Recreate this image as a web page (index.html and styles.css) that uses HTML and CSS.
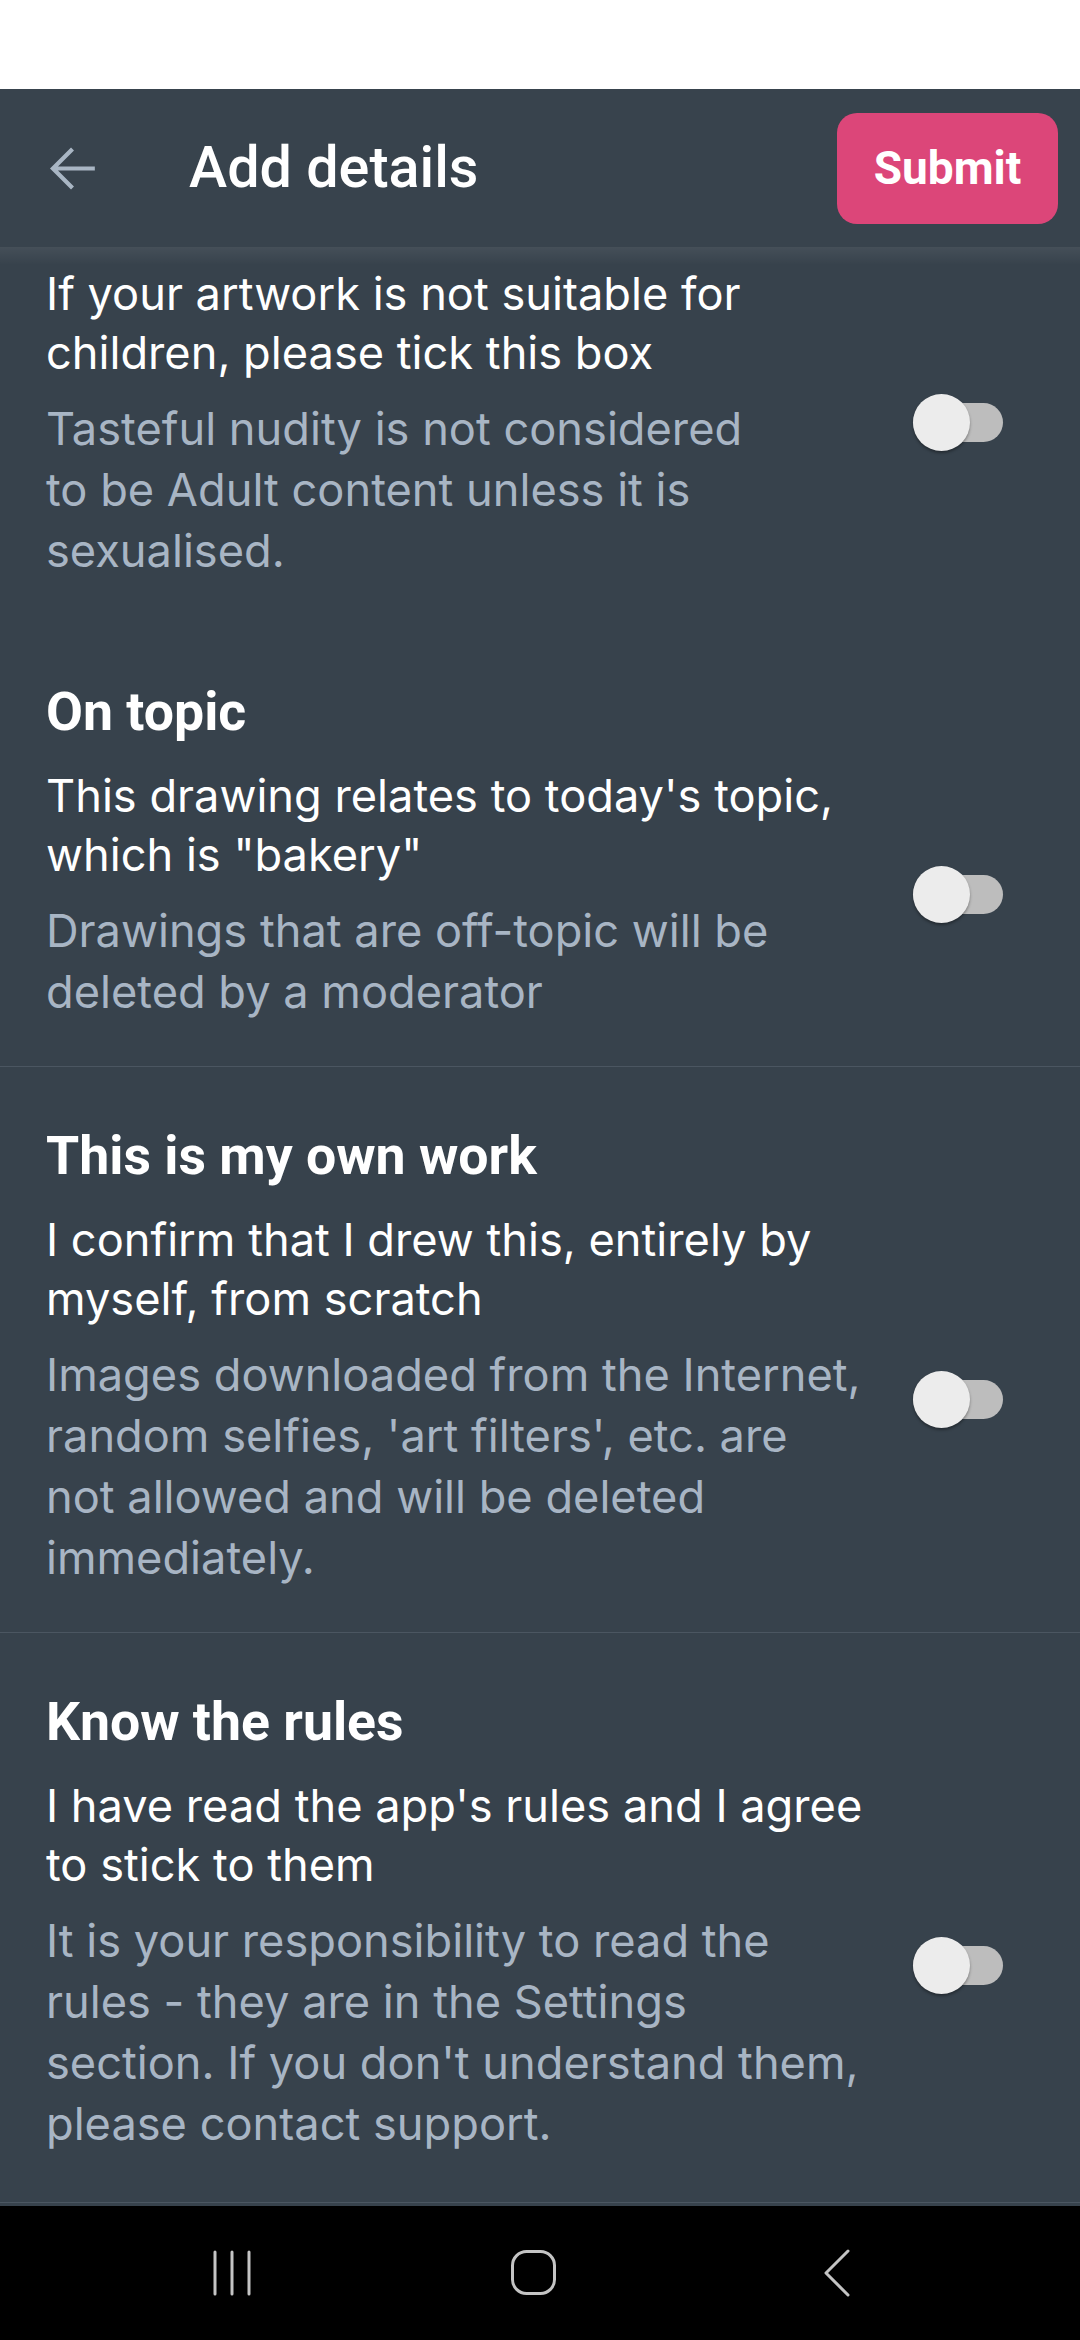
FILE: index.html
```html
<!DOCTYPE html>
<html lang="en">
<head>
<meta charset="utf-8">
<title>Add details</title>
<link rel="stylesheet" href="styles.css">
</head>
<body>
<div class="screen">
  <div class="statusbar"></div>
  <header class="appbar">
    <button class="back" aria-label="Back">
      <svg viewBox="0 0 24 24" width="67" height="67"><path d="M20 12H5.2M12 5l-7 7 7 7" fill="none" stroke="#a9b6c4" stroke-width="1.5" stroke-linecap="butt" stroke-linejoin="miter"/></svg>
    </button>
    <h1 class="title">Add details</h1>
    <button class="submit">Submit</button>
  </header>
  <main class="content">
    <section class="item item--cut">
      <div class="row">
        <div class="texts">
          <p class="primary">If your artwork is not suitable for<br>children, please tick this box</p>
          <p class="secondary">Tasteful nudity is not considered<br>to be Adult content unless it is<br>sexualised.</p>
        </div>
        <span class="switch"><span class="track"></span><span class="thumb"></span></span>
      </div>
    </section>
    <section class="item">
      <h2 class="heading">On topic</h2>
      <div class="row">
        <div class="texts">
          <p class="primary">This drawing relates to today's topic,<br>which is "bakery"</p>
          <p class="secondary">Drawings that are off-topic will be<br>deleted by a moderator</p>
        </div>
        <span class="switch"><span class="track"></span><span class="thumb"></span></span>
      </div>
    </section>
    <section class="item">
      <h2 class="heading">This is my own work</h2>
      <div class="row">
        <div class="texts">
          <p class="primary">I confirm that I drew this, entirely by<br>myself, from scratch</p>
          <p class="secondary">Images downloaded from the Internet,<br>random selfies, 'art filters', etc. are<br>not allowed and will be deleted<br>immediately.</p>
        </div>
        <span class="switch"><span class="track"></span><span class="thumb"></span></span>
      </div>
    </section>
    <section class="item item--last">
      <h2 class="heading">Know the rules</h2>
      <div class="row">
        <div class="texts">
          <p class="primary">I have read the app's rules and I agree<br>to stick to them</p>
          <p class="secondary">It is your responsibility to read the<br>rules - they are in the Settings<br>section. If you don't understand them,<br>please contact support.</p>
        </div>
        <span class="switch"><span class="track"></span><span class="thumb"></span></span>
      </div>
    </section>
  </main>
  <nav class="navbar">
    <span class="nav-btn nav-recents">
      <svg width="40" height="46" viewBox="0 0 40 46"><path d="M3 2v42M20 2v42M37 2v42" stroke="#c4c4c4" stroke-width="3" stroke-linecap="round"/></svg>
    </span>
    <span class="nav-btn nav-home">
      <svg width="48" height="48" viewBox="0 0 48 48"><rect x="2.5" y="2.5" width="42" height="42" rx="14" fill="none" stroke="#c4c4c4" stroke-width="3"/></svg>
    </span>
    <span class="nav-btn nav-back">
      <svg width="28" height="48" viewBox="0 0 28 48"><path d="M25 2L3 24l22 22" fill="none" stroke="#c4c4c4" stroke-width="3" stroke-linecap="round" stroke-linejoin="round"/></svg>
    </span>
  </nav>
</div>
</body>
</html>
```

FILE: styles.css
```css
* { box-sizing: border-box; }

html, body {
  margin: 0;
  padding: 0;
  background: #37424c;
}

.screen {
  width: 1080px;
  height: 2340px;
  display: flex;
  flex-direction: column;
  overflow: hidden;
  background: #37424c;
}

.statusbar {
  height: 89px;
  flex: none;
  background: #ffffff;
}

.appbar {
  position: relative;
  height: 158px;
  flex: none;
  display: flex;
  align-items: center;
  background: #38434d;
  z-index: 2;
}

.appbar::after {
  content: "";
  position: absolute;
  left: 0;
  right: 0;
  top: 100%;
  height: 18px;
  background: linear-gradient(to bottom, rgba(255,255,255,0.07), rgba(255,255,255,0));
}

.back {
  display: flex;
  align-items: center;
  justify-content: center;
  width: 67px;
  height: 67px;
  margin-left: 39px;
  padding: 0;
  border: 0;
  background: none;
}

.back svg { display: block; }

.title {
  margin: 0 0 0 83px;
  flex: 1;
  font-family: Roboto, "Liberation Sans", sans-serif;
  font-weight: 500;
  font-size: 57.5px;
  color: #ffffff;
  line-height: 1;
  letter-spacing: 0;
}

.submit {
  width: 221px;
  height: 111px;
  margin-right: 22px;
  border: 0;
  border-radius: 20px;
  background: #dc4679;
  color: #ffffff;
  font-family: Roboto, "Liberation Sans", sans-serif;
  font-weight: 700;
  font-size: 46px;
  line-height: 1;
  padding: 0;
}

.content {
  flex: 1;
  overflow: hidden;
  display: flex;
  flex-direction: column;
}

.item {
  padding: 59px 0 44px 46px;
  border-bottom: 1px solid #4b5661;
}

.item--cut {
  padding-top: 17px;
  padding-bottom: 42px;
  border-bottom: 0;
}

.item--last {
  padding-bottom: 48px;
}

.heading {
  margin: 0 0 24px;
  font-family: Roboto, "Liberation Sans", sans-serif;
  font-weight: 700;
  font-size: 53.6px;
  line-height: 60px;
  color: #ffffff;
}

.row {
  display: flex;
  align-items: center;
  gap: 40px;
  padding-right: 77px;
}

.texts {
  flex: 1;
  min-width: 0;
  white-space: nowrap;
}

.primary,
.secondary {
  margin: 0;
  font-family: Inter, "Noto Sans", sans-serif;
  font-size: 45.2px;
  font-weight: 400;
}

.primary {
  line-height: 59px;
  color: #ffffff;
}

.secondary {
  margin-top: 16px;
  line-height: 61px;
  color: #a8b5c4;
}

.switch {
  position: relative;
  flex: none;
  width: 90px;
  height: 57px;
}

.track {
  position: absolute;
  left: 0;
  right: 0;
  top: 9px;
  height: 39px;
  border-radius: 20px;
  background: #bdbdbd;
}

.thumb {
  position: absolute;
  left: 0;
  top: 0;
  width: 57px;
  height: 57px;
  border-radius: 50%;
  background: #ececec;
  box-shadow: 0 2px 3px rgba(0,0,0,0.35);
}

.navbar {
  height: 134px;
  flex: none;
  background: #000000;
  display: flex;
  align-items: center;
  padding-left: 212px;
}

.nav-btn {
  display: flex;
  align-items: center;
  justify-content: center;
}

.nav-home { margin-left: 258px; }
.nav-back { margin-left: 265px; }

.nav-btn svg { display: block; }
```
